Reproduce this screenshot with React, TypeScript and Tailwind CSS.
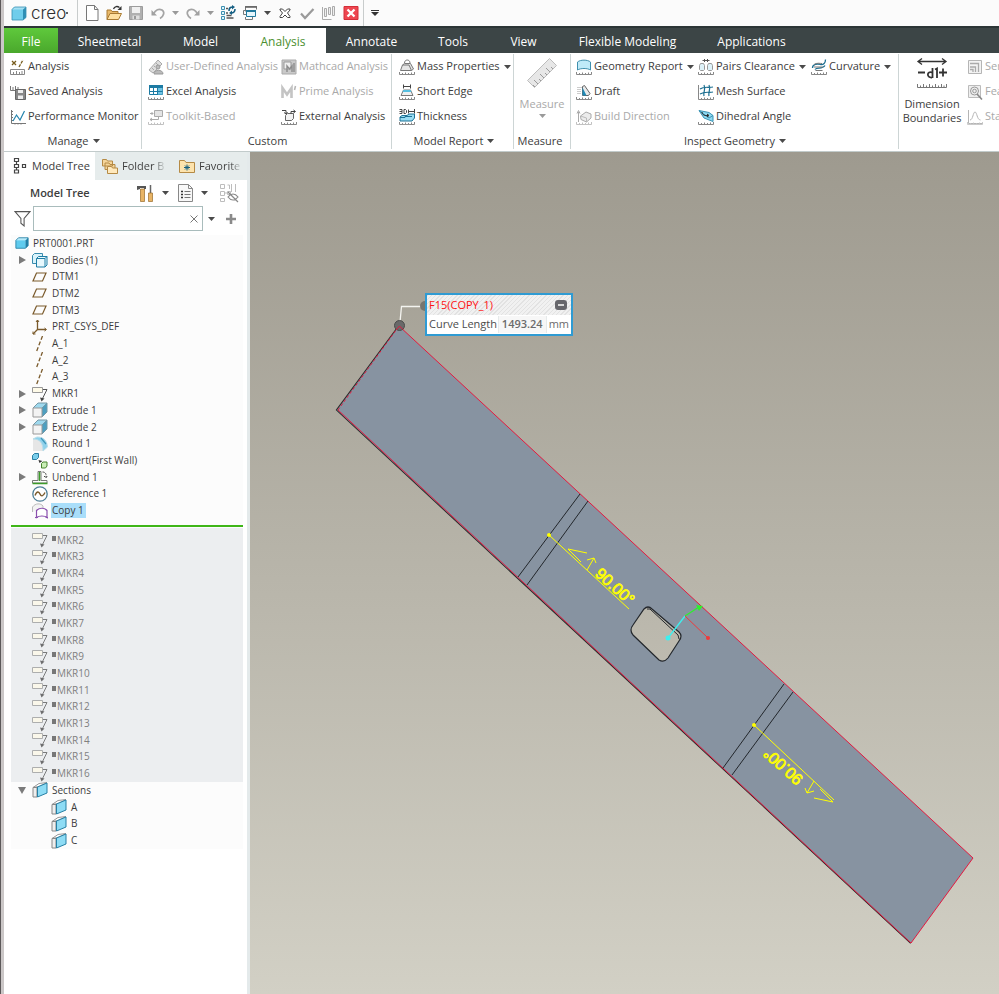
import { FC, ReactNode } from "react";

export default function App() {
  return (
    <div className="flex min-h-screen overflow-hidden bg-white font-['Open_Sans','Noto_Sans',sans-serif] text-[11px] text-[#3c3c3c]">
      <div className="w-1 shrink-0 border-l border-[#5c5859] bg-[#cbc7c7]" />
      <div className="flex min-w-0 flex-1 flex-col">
        <QuickAccessBar />
        <TabBar />
        <Ribbon />
        <main className="flex flex-1">
          <ModelTreePanel />
          <Viewport />
        </main>
      </div>
    </div>
  );
}

/* ---------- shared bits ---------- */

interface IconProps {
  children: ReactNode;
  size?: string;
  box?: string;
}

const Icon: FC<IconProps> = ({ children, size = "size-4", box = "0 0 16 16" }) => (
  <svg viewBox={box} className={`${size} shrink-0`} fill="none" aria-hidden="true">
    {children}
  </svg>
);

const Caret: FC<{ tone?: string }> = ({ tone = "text-[#4a4a4a]" }) => (
  <svg viewBox="0 0 7 4" className={`h-1 w-[7px] shrink-0 ${tone}`} aria-hidden="true">
    <path d="M0 0h7L3.5 4z" fill="currentColor" />
  </svg>
);

const Ticks: FC<{ tone?: string }> = ({ tone = "#7a7a7a" }) => (
  <path d="M.5 13v2.500h15V13M3.500 14v1M6.500 13.500V15M9.500 14v1M12.500 13.500V15" stroke={tone} strokeWidth=".9" />
);

/* ---------- quick access ---------- */

const QuickButton: FC<{ label: string; children: ReactNode }> = ({ label, children }) => (
  <button type="button" aria-label={label} className="flex w-[22px] items-center justify-center">
    {children}
  </button>
);

const QuickCaret: FC<{ label: string; tone?: string }> = ({ label, tone }) => (
  <button type="button" aria-label={label} className="flex w-[13px] items-center justify-center">
    <Caret tone={tone} />
  </button>
);

function QuickAccessBar() {
  return (
    <header className="flex h-[26px] items-stretch bg-[#fbfbfb]">
      <div className="flex w-[74px] items-center gap-1 border-r border-[#c8cccc] pl-[7px]">
        <Icon>
          <path d="M1 4l2-2h12v10l-3 3H1z" fill="#a5e0f3" />
          <path d="M1 4.500h11V15H1z" fill="#6fcdeb" />
          <path d="M12 4.500l3-2.500v10.500L12 15z" fill="#2f8fb5" />
          <path d="M1 4.500L3.500 2H15v10.500L12 15H1z" stroke="#3690b3" strokeWidth=".8" />
        </Icon>
        <span className="font-['Inter',sans-serif] text-[17px] leading-5 font-light text-[#2d2d2d]">creo</span>
        <span className="-ml-1 size-[2px] rounded-full bg-[#2d2d2d]" />
      </div>
      <div className="flex pl-[3px]">
        <QuickButton label="New">
          <Icon>
            <path d="M2.500.5h8l3.500 4v11H2.500z" fill="#fff" stroke="#777" />
            <path d="M10.500.5v4H14" stroke="#777" />
          </Icon>
        </QuickButton>
        <QuickButton label="Open">
          <Icon>
            <path d="M1 14.500V5h4l1 1.500h6V9" fill="#e9b96a" stroke="#a97b33" />
            <path d="M1 14.500L4 8.500h11.500l-3 6z" fill="#ffe0a0" stroke="#a97b33" />
            <path d="M7.500 4c1-3 4-3 6-1.500" stroke="#333" strokeWidth="1.300" />
            <path d="M15.500 1v4h-4z" fill="#333" />
          </Icon>
        </QuickButton>
        <QuickButton label="Save">
          <Icon>
            <path d="M1.500 1.500h13v13h-13z" fill="#b0b0b0" stroke="#9c9c9c" />
            <path d="M4 2h8v6H4z" fill="#f0f0f0" />
            <path d="M4.500 10.500h7v4h-7z" fill="#dedede" />
            <path d="M6 11h2v3H6z" fill="#999" />
          </Icon>
        </QuickButton>
        <QuickButton label="Undo">
          <Icon>
            <path d="M1.500 5v5.500H7z" fill="#a0a0a0" />
            <path d="M3.500 9C5.500 4.500 9 3.500 12 5c3 2 2 6-2 8.500" stroke="#a4a4a4" strokeWidth="1.700" />
          </Icon>
        </QuickButton>
        <QuickCaret label="Undo list" tone="text-[#999]" />
        <QuickButton label="Redo">
          <Icon>
            <path d="M14.500 5v5.500H9z" fill="#a0a0a0" />
            <path d="M12.500 9C10.500 4.500 7 3.500 4 5c-3 2-2 6 2 8.500" stroke="#a4a4a4" strokeWidth="1.700" />
          </Icon>
        </QuickButton>
        <QuickCaret label="Redo list" tone="text-[#999]" />
        <QuickButton label="Regenerate">
          <Icon>
            <path d="M1.500 1.500h3v3h-3zM1.500 6.500h3v3h-3zM1.500 11.500h3v3h-3z" fill="#dff5fc" stroke="#3d8fb0" />
            <path d="M6.500 13h7M6.500 10.500h5M6 3.500h2M6 8h2" stroke="#555" strokeWidth="1.300" />
            <path d="M9 6c0-3 1-4 4-4M15 4c0 3-1 4-4 4" stroke="#155f83" strokeWidth="1.600" />
            <path d="M12 0l3 2-3 2.500zM12 5.500l-3 2.500 3 2z" fill="#155f83" />
          </Icon>
        </QuickButton>
        <QuickButton label="Windows">
          <Icon>
            <path d="M3.500 6.500v-5h11v3" stroke="#777" />
            <path d="M3 2h12" stroke="#666" strokeWidth="1.600" />
            <path d="M4 5.500H1.500v4H4M3.500 12v2.500h7V12" stroke="#777" />
            <path d="M4.500 5.500h9v6h-9z" fill="#e6f6fc" stroke="#21799d" />
            <path d="M4 6h10" stroke="#21799d" strokeWidth="2" />
          </Icon>
        </QuickButton>
        <QuickCaret label="Window list" />
        <QuickButton label="Close window">
          <Icon>
            <path d="M3 4h2.500L8 6.500 10.500 4H13v1l-2.500 3 2.500 3.500v1h-2.500L8 10l-2.500 2.500H3v-1L5.500 8 3 5z" fill="#fff" stroke="#444" />
          </Icon>
        </QuickButton>
        <QuickButton label="Accept">
          <Icon>
            <path d="M2 8.500l4 4.500L14.500 4" stroke="#9a9a9a" strokeWidth="2.200" />
          </Icon>
        </QuickButton>
        <QuickButton label="Align">
          <Icon>
            <path d="M1.500 2v12.500h9" stroke="#aaa" />
            <path d="M3.500 3.500h2v8h-2zM7.500 2.500h2v7h-2zM11.500 1.500h2v9h-2z" fill="#eee" stroke="#aaa" />
          </Icon>
        </QuickButton>
        <QuickButton label="Close">
          <Icon>
            <path d="M1 1.500h14v13H1z" fill="#ee4650" stroke="#d42e38" />
            <path d="M4.500 4.500l7 7m0-7l-7 7" stroke="#fff" strokeWidth="2.300" />
          </Icon>
        </QuickButton>
      </div>
      <button type="button" aria-label="Customize toolbar" className="ml-px border-l border-[#c8cccc] px-[7px]">
        <svg viewBox="0 0 8 6" className="h-[6px] w-2" aria-hidden="true">
          <path d="M0 0h8v1H0zM0 2h8L4 6z" fill="#333" />
        </svg>
      </button>
    </header>
  );
}

/* ---------- tabs ---------- */

const TABS = [
  { name: "File", style: "w-[54px] bg-linear-to-b from-[#5fc93c] to-[#4aa82c] text-white" },
  { name: "Sheetmetal", style: "w-[103px] text-white" },
  { name: "Model", style: "w-[79px] text-white" },
  { name: "Analysis", style: "w-[86px] bg-white text-[#4b8f2f]" },
  { name: "Annotate", style: "w-[91px] text-white" },
  { name: "Tools", style: "w-[72px] text-white" },
  { name: "View", style: "w-[69px] text-white" },
  { name: "Flexible Modeling", style: "w-[139px] text-white" },
  { name: "Applications", style: "w-[109px] text-white" },
];

function TabBar() {
  return (
    <nav className="flex h-[27px] border-t-2 border-[#2c3536] bg-[#3c4546] text-xs">
      {TABS.map((tab) => (
        <button key={tab.name} type="button" className={`shrink-0 pt-[2px] ${tab.style}`}>
          {tab.name}
        </button>
      ))}
    </nav>
  );
}

/* ---------- ribbon ---------- */

interface CommandProps {
  label: string;
  icon: ReactNode;
  disabled?: boolean;
  menu?: boolean;
}

const Command: FC<CommandProps> = ({ label, icon, disabled, menu }) => (
  <button
    type="button"
    disabled={disabled}
    className={`flex h-[25px] items-center gap-[2px] whitespace-nowrap ${disabled ? "text-[#a9a9a9]" : ""}`}
  >
    <Icon>{icon}</Icon>
    <span>{label}</span>
    {menu && (
      <span className="ml-[2px]">
        <Caret />
      </span>
    )}
  </button>
);

interface GroupProps {
  title?: string;
  width: string;
  menu?: boolean;
  children: ReactNode;
}

const Group: FC<GroupProps> = ({ title, width, menu, children }) => (
  <section className={`flex flex-col border-r border-[#cdd5d5] ${width}`}>
    <div className="flex h-[75px]">{children}</div>
    {title && (
      <h2 className="flex flex-1 items-center justify-center gap-1 pt-1 pr-1">
        {title}
        {menu && <Caret />}
      </h2>
    )}
  </section>
);

const userDefinedIcon = (
  <>
    <path d="M1 11L10 1l4 4-9 9z" fill="#ddd" stroke="#aaa" />
    <path d="M4 9l2 2M6 7l1 1M8 4l2 2" stroke="#aaa" />
    <path d="M10 10a2 2 0 100-4 2 2 0 000 4zM6 15c0-5 9-5 9 0z" fill="#bbb" stroke="#999" />
  </>
);

const mathcadIcon = (
  <>
    <path d="M1 1h14v14H1z" fill="#c9c9c9" stroke="#aaa" />
    <path d="M3 3h7v7H3z" fill="#eee" stroke="#999" />
    <path d="M6 13V7l2.500 3L11 7v6M13 4v9" stroke="#8c8c8c" strokeWidth="1.400" />
  </>
);

const buildIcon = (
  <>
    <path d="M2.500 13V3M1 4.500l1.500-3L4 4.500M4.500 7L10 3l5 2v4l-4.500 4L5 10.500z" fill="#ececec" stroke="#aaa" />
    <path d="M4.500 7l6 2v4" stroke="#bbb" />
    <Ticks tone="#bbb" />
  </>
);

function Ribbon() {
  return (
    <div className="flex h-[99px] overflow-hidden border-b border-[#c2cbcb] bg-white pt-px pb-[2px]">
      <Group title="Manage" width="w-[138px] pl-[6px]" menu>
        <div>
          <Command
            label="Analysis"
            icon={
              <>
                <path d="M2 2l4 4m0-4L2 6" stroke="#775c1d" strokeWidth="1.300" />
                <path d="M9 8l4-7" stroke="#775c1d" strokeWidth="1.300" strokeDasharray="3 1" />
                <path d="M.5 10.500h14v5H.5zM3.500 13v2M6.500 12v3M9.500 13v2M12 12v3" stroke="#888" />
              </>
            }
          />
          <Command
            label="Saved Analysis"
            icon={
              <>
                <path d="M.5 2v4.500h9M3 3v3M5.500 2v4M8 3v3" stroke="#777" />
                <path d="M5.500 5.500h10v10h-10z" fill="#888" stroke="#666" />
                <path d="M8 6h5v3H8zM8 11.500h5V15H8z" fill="#eee" />
              </>
            }
          />
          <Command
            label="Performance Monitor"
            icon={
              <>
                <path d="M1.500 1v13.500H16M1.500 2.500H3M1.500 5.500H3M1.500 8.500H3M1.500 11.500H3M5 14v1.500M8 14v1.500M11 14v1.500" stroke="#777" />
                <path d="M3 12l3.500-6 3.500 5L14.500 2" stroke="#2584ad" strokeWidth="1.200" />
              </>
            }
          />
        </div>
      </Group>

      <Group title="Custom" width="w-[250px] pl-[6px]">
        <div className="w-[133px]">
          <Command label="User-Defined Analysis" icon={userDefinedIcon} disabled />
          <Command
            label="Excel Analysis"
            icon={
              <>
                <path d="M1.500 1.500h13v9h-13z" fill="#fff" stroke="#1d7ba3" />
                <path d="M1 1h14v3H1z" fill="#1d7ba3" />
                <path d="M10 4h4.500v6.500H10z" fill="#6fc3e3" />
                <path d="M5.500 4v6.500M9.500 4v6.500M1.500 7.500h13" stroke="#1d7ba3" />
                <Ticks />
              </>
            }
          />
          <Command
            label="Toolkit-Based"
            icon={
              <>
                <path d="M6.500 1.500h8v6h-8z" fill="#e4e4e4" stroke="#aaa" />
                <path d="M2 4.500h3M3.500 3l1.500 1.500L3.500 6M10.500 7.500v3H2M4 9l-2 1.500L4 12" stroke="#aaa" />
                <Ticks tone="#bbb" />
              </>
            }
            disabled
          />
        </div>
        <div>
          <Command label="Mathcad Analysis" icon={mathcadIcon} disabled />
          <Command
            label="Prime Analysis"
            icon={
              <>
                <path d="M1.500 14V4L6 10.500 10.500 4v10" stroke="#c4c4c4" strokeWidth="2.600" />
                <path d="M14.500 2L13.500 6" stroke="#b5b5b5" strokeWidth="1.600" />
              </>
            }
            disabled
          />
          <Command
            label="External Analysis"
            icon={
              <>
                <path d="M4.500 6.500l2-2h6v5l-2 2h-6z" fill="#f2f2f2" stroke="#666" />
                <path d="M1 1.500h4V5M3 3.500L5 5l1.500-2M10 5V2.500h4M12.500 1l2 1.500-2 1.500" stroke="#444" />
                <Ticks />
              </>
            }
          />
        </div>
      </Group>

      <Group title="Model Report" width="w-[122px] pl-[7px]" menu>
        <div>
          <Command
            label="Mass Properties"
            icon={
              <>
                <path d="M1.500 11.500L3.500 6l2-1.500h6L14.500 10l-2 1.500z" fill="#e5e5e5" stroke="#777" />
                <path d="M3.500 6h6.500l2.500 5.500M5.500 4c0-4 5.500-4 5.500 0" stroke="#777" />
                <Ticks />
              </>
            }
            menu
          />
          <Command
            label="Short Edge"
            icon={
              <>
                <path d="M4.500.5v4M11.500.5v4M5 2.500h6" stroke="#444" />
                <path d="M4.500 6h7l2.500 5.500H2z" fill="#efefef" stroke="#777" />
                <path d="M4.500 6h7l1 2h-9z" fill="#56bfe0" />
                <Ticks />
              </>
            }
          />
          <Command
            label="Thickness"
            icon={
              <>
                <path d="M.5.500H3v4H.5M.5 2.500H3M5 .5v4h1.500l1-1v-2l-1-1zM9.500.5v4M15.500 0v4.500M10 2.500h5" stroke="#444" />
                <path d="M1 8l2-1.500h5l2-1.500h5.500v4L13 12H1z" fill="#9adcf2" stroke="#1d7396" />
                <path d="M1 8.500h5v-1h7" stroke="#1d7396" />
                <Ticks />
              </>
            }
          />
        </div>
      </Group>

      <Group title="Measure" width="w-[57px]">
        <button type="button" disabled className="flex flex-1 flex-col items-center pt-[3px] text-[#a9a9a9]">
          <Icon size="size-8" box="0 0 32 32">
            <path d="M1.500 23.500L23.500 1.500l7 7-22 22z" fill="#e7e7e7" stroke="#bdbdbd" />
            <path
              d="M9 30l-2-2M12 27l-4-4M15 24l-2-2M18 21l-4-4M21 18l-2-2M24 15l-4-4M27 12l-2-2"
              stroke="#9a9a9a"
            />
          </Icon>
          <span className="mt-[7px]">Measure</span>
          <span className="mt-px">
            <Caret tone="text-[#9a9a9a]" />
          </span>
        </button>
      </Group>

      <Group title="Inspect Geometry" width="w-[328px] pl-[5px]" menu>
        <div className="w-[122px]">
          <Command
            label="Geometry Report"
            icon={
              <>
                <path d="M1.500 11V3c3-2.500 10-2.500 13 0v8c-3-2-10-2-13 0z" fill="#bfeaf8" stroke="#3f8fad" />
                <Ticks />
              </>
            }
            menu
          />
          <Command
            label="Draft"
            icon={
              <>
                <path d="M1 3.500h5M1 5.500h4M1 7.500h4M1 9.500h4" stroke="#ccc" />
                <path d="M6.500 11.500v-9l2-1 5.500 8-1.500 2z" fill="#e9e9e9" stroke="#666" />
                <path d="M6.500 11.500v-8l4 8z" fill="#1f8ab6" />
                <Ticks />
              </>
            }
          />
          <Command label="Build Direction" icon={buildIcon} disabled />
        </div>
        <div className="w-[113px]">
          <Command
            label="Pairs Clearance"
            icon={
              <>
                <path d="M2.500 4.500h3l1 2v4l-1 1h-3l-1-1v-4zM10.500 4.500h3l1 2v4l-1 1h-3l-1-1v-4z" fill="#def3fa" stroke="#999" />
                <path d="M4.500 1.500h7M6.500 0v3M9.500 0v3" stroke="#555" />
                <Ticks />
              </>
            }
            menu
          />
          <Command
            label="Mesh Surface"
            icon={
              <>
                <path d="M2 5c4-3 8-1 13-2M2 10c5-3 9-1 13-2M6 1c2 4-1 7 0 11M11 1c2 4-1 7 0 11" stroke="#1c6f91" strokeWidth="1.200" />
                <path d="M.5 1v14.500h15V13M3.500 14v1M6.500 13.500V15M9.500 14v1M12.500 13.500V15" stroke="#888" />
              </>
            }
          />
          <Command
            label="Dihedral Angle"
            icon={
              <>
                <path d="M1 1.500l10 2 4 3v6L6 9z" fill="#8ed8f0" stroke="#3b94b5" />
                <path d="M1 1.500L11 9l4-2.500" stroke="#3b94b5" />
                <path d="M4 3c0 3 3 4 6 3.500M9 5l2 1.500L9 8" stroke="#222" />
                <Ticks />
              </>
            }
          />
        </div>
        <div>
          <Command
            label="Curvature"
            icon={
              <>
                <path d="M1.500 9c0-4 5-4.500 8-3.500 3 .5 5-1.500 5-5M4 10.500c2-3 7 .5 10-4" stroke="#1c6f91" strokeWidth="1.300" />
                <path d="M3 5.500c3-2 6-1 8-1M3 8h9M4.500 11.500h7" stroke="#777" />
                <Ticks />
              </>
            }
            menu
          />
        </div>
      </Group>

      <div className="flex min-w-0 flex-1 overflow-hidden">
        <button type="button" className="flex w-[66px] shrink-0 flex-col items-center pt-[3px] leading-[14px]">
          <Icon size="size-8" box="0 0 32 32">
            <path d="M2 4.500h28M6 1.500l-4 3 4 3M26 1.500l4 3-4 3" stroke="#333" strokeWidth="1.300" />
            <path
              d="M2 15.500h7M23 15.500h8M27 11.500v8M16.500 11v10M16 15.500c-5-2-6 5.500 0 5M19 12.500l2-1V21"
              stroke="#333"
              strokeWidth="1.800"
            />
            <path d="M1.500 27v3.500h29V27M4.500 28.500v2M7.500 27v3M10.500 28.500v2M13.500 27v3M16.500 28.500v2M19.500 27v3M22.500 28.500v2M25.500 27v3M28 28.500v2" stroke="#777" />
          </Icon>
          <span className="mt-2">
            Dimension
            <br />
            Boundaries
          </span>
        </button>
        <div className="pl-[2px]">
          <Command
            label="Sen"
            icon={
              <>
                <path d="M1.500 1.500h13v13h-13z" fill="#f3f3f3" stroke="#b5b5b5" />
                <path d="M3 4.500h8.500V13M3 8h5.500v5M3 10.500h3V13" stroke="#aaa" strokeWidth="1.300" />
              </>
            }
            disabled
          />
          <Command
            label="Fea"
            icon={
              <>
                <path d="M1.500 1.500h12v12h-12z" fill="#efefef" stroke="#bbb" />
                <circle cx="7.500" cy="7" r="4" stroke="#999" />
                <circle cx="7.500" cy="7" r="1.800" stroke="#999" />
                <path d="M10 10l5 5.500" stroke="#888" strokeWidth="1.600" />
              </>
            }
            disabled
          />
          <Command
            label="Sta"
            icon={
              <>
                <path d="M1.500 1v13.500H16M3 11c3 0 3-8 5-8s2 8 5.500 8" stroke="#b5b5b5" />
                <Ticks tone="#c5c5c5" />
              </>
            }
            disabled
          />
        </div>
      </div>
    </div>
  );
}

/* ---------- model tree ---------- */

const TREE_ICONS: Record<string, ReactNode> = {
  part: (
    <>
      <path d="M1 5l3-3h11v9l-3 3H1z" fill="#b9ebfa" />
      <path d="M1 5h11v9H1z" fill="#5fcbee" />
      <path d="M12 5l3-3v9l-3 3z" fill="#1f7ea6" />
      <path d="M1 5l3-3h11v9l-3 3H1z" stroke="#2b83a8" />
    </>
  ),
  bodies: (
    <>
      <path d="M.5 3.500l2-2h8v8l-2 2h-8z" fill="#d9f3fb" stroke="#3a8cae" />
      <path d="M4.500 6.500l2-2h8.500v8.500l-2 2H4.500z" fill="#e8f8fd" stroke="#1f7ea6" />
      <path d="M4.500 6.500H13V15m0-8.500l2-2" stroke="#1f7ea6" />
    </>
  ),
  plane: <path d="M4.500 4h9.500l-3.500 8H1z" stroke="#7a5a2b" strokeWidth="1.200" />,
  csys: (
    <>
      <path d="M5.500 1v9.500H14M5.500 10.500L1 15" stroke="#7a5a2b" strokeWidth="1.300" />
      <path d="M4 3l1.500-2L7 3M12.500 9l2 1.500-2 1.500M1 12.500V15h2.500" stroke="#7a5a2b" />
    </>
  ),
  axis: <path d="M10.500 0L4.500 15.500" stroke="#7a5a2b" strokeWidth="1.300" strokeDasharray="4 2" />,
  note: (
    <>
      <path d="M.5 1.500h10v5H.5z" fill="#fffbe8" stroke="#999" />
      <path d="M11 3.500h4l-5 10" stroke="#555" />
      <path d="M8 11.500l1.500 4 3-3z" fill="#444" />
    </>
  ),
  extrude: (
    <>
      <path d="M1 6l5-5h9v9l-5 5z" fill="#9fd9ee" />
      <path d="M10 6l5-5v9l-5 5z" fill="#4d9fc0" />
      <path d="M1 6l5-5h9v9l-5 5M10 6l5-5" stroke="#7598a6" />
      <path d="M1 6h9v9H1z" fill="#f3f3f3" stroke="#999" />
    </>
  ),
  round: (
    <>
      <path d="M1 3c7 0 10 4 10 12H1z" fill="#e6e6e6" />
      <path d="M1 3l4-2c7 0 10 4 10.500 10L11 15C11 7 8 3 1 3z" fill="#8fd2ec" stroke="#b9dde9" />
      <path d="M9 2l5 6" stroke="#3f97ba" strokeWidth="1.200" />
    </>
  ),
  convert: (
    <>
      <path d="M.5 2.500l2-2h4v4l-2 2h-4z" fill="#79cdeb" stroke="#2a7fa3" />
      <path d="M9.500 10.500l1.500-1.500h4v4l-1.500 2h-4z" fill="#c9eeb6" stroke="#48842f" />
      <path d="M6.500 7l4 1-3 2z" fill="#333" />
    </>
  ),
  unbend: (
    <>
      <path d="M.5 11.500H6v-9h3v9h6v2.500H.5z" fill="#fff" stroke="#777" />
      <path d="M.5 14.500h15M7.500 3v9" stroke="#3c9c2a" strokeWidth="1.500" />
      <path d="M10.500 3c3 0 4 2 3.500 5M12 7l2 2 1.500-2.500" stroke="#444" strokeDasharray="2 1" />
    </>
  ),
  reference: (
    <>
      <circle cx="8" cy="8" r="7.200" stroke="#4c7e97" strokeWidth="1.300" fill="#fff" />
      <path d="M3 9.500c2-5 4-4 5-1.500s3 3 5-1.500" stroke="#7a5a2b" strokeWidth="1.400" />
    </>
  ),
  copy: (
    <>
      <path d="M.5 9V4c3-4 8-4 10.500-1v3" stroke="#bbb" fill="#f3f3f3" />
      <path d="M4.500 14.500v-7c3-3 8-3 10.500 0v7c-2-2-8-2-10.500 0zM3 14.500h3M13.500 14.500H16" stroke="#8a4fae" strokeWidth="1.200" fill="#fff" />
    </>
  ),
  section: (
    <>
      <path d="M1 5.500L7 1.500l8-1-8 4z" fill="#fff" stroke="#999" />
      <path d="M1 5.500h4v9.500H1z" fill="#eee" stroke="#888" />
      <path d="M5.500 5L15 1v10l-9.500 4z" fill="#8edcf5" stroke="#2780a5" />
    </>
  ),
};

interface TreeItem {
  name: string;
  icon: string;
  level?: number;
  expander?: "open" | "closed";
  suppressed?: boolean;
  selected?: boolean;
}

const ACTIVE_ITEMS: TreeItem[] = [
  { name: "PRT0001.PRT", icon: "part", level: 0 },
  { name: "Bodies (1)", icon: "bodies", expander: "closed" },
  { name: "DTM1", icon: "plane" },
  { name: "DTM2", icon: "plane" },
  { name: "DTM3", icon: "plane" },
  { name: "PRT_CSYS_DEF", icon: "csys" },
  { name: "A_1", icon: "axis" },
  { name: "A_2", icon: "axis" },
  { name: "A_3", icon: "axis" },
  { name: "MKR1", icon: "note", expander: "closed" },
  { name: "Extrude 1", icon: "extrude", expander: "closed" },
  { name: "Extrude 2", icon: "extrude", expander: "closed" },
  { name: "Round 1", icon: "round" },
  { name: "Convert(First Wall)", icon: "convert" },
  { name: "Unbend 1", icon: "unbend", expander: "closed" },
  { name: "Reference 1", icon: "reference" },
  { name: "Copy 1", icon: "copy", selected: true },
];

const SUPPRESSED_ITEMS: TreeItem[] = Array.from({ length: 15 }, (_, i) => ({
  name: `MKR${i + 2}`,
  icon: "note",
  suppressed: true,
}));

const SECTION_ITEMS: TreeItem[] = [
  { name: "Sections", icon: "section", expander: "open" },
  { name: "A", icon: "section", level: 2 },
  { name: "B", icon: "section", level: 2 },
  { name: "C", icon: "section", level: 2 },
];

const LEVEL_INDENT = ["pl-1", "pl-[7px]", "pl-10"];

const TreeRow: FC<{ item: TreeItem }> = ({ item }) => {
  const level = item.level ?? 1;
  return (
    <li className={`flex items-center ${LEVEL_INDENT[level]}`}>
      {level === 1 && (
        <span className="w-[14px] shrink-0">
          {item.expander && (
            <button type="button" aria-label={`Toggle ${item.name}`} className="block">
              <svg viewBox="0 0 8 8" className="size-2" aria-hidden="true">
                <path d={item.expander === "open" ? "M0 1h8L4 8z" : "M1 0l7 4-7 4z"} fill="#7b7b7b" />
              </svg>
            </button>
          )}
        </span>
      )}
      <span className={item.suppressed ? "opacity-75" : ""}>
        <Icon size={level === 0 ? "size-[14px]" : "size-4"}>{TREE_ICONS[item.icon]}</Icon>
      </span>
      {item.suppressed && <span className="mb-1 ml-1 h-[5px] w-1 bg-[#777]" />}
      <span
        className={`whitespace-nowrap leading-[15px] ${
          item.suppressed ? "ml-px text-[#808080]" : item.selected ? "ml-[3px] bg-[#a9defa] px-px pr-[2px]" : "ml-1"
        }`}
      >
        {item.name}
      </span>
    </li>
  );
};

const PANEL_TABS = [
  {
    name: "Model Tree",
    style: "w-[91px] gap-[3px] bg-white pl-[9px]",
    icon: <path d="M1.500.5h4v3h-4zM1.500 6.500h4v3h-4zM1.500 12h4v3h-4zM9.500 6.500h3v3h-3zM3.500 3.500v3M3.500 9.500V12" stroke="#444" strokeWidth="1.200" />,
  },
  {
    name: "Folder B",
    style: "w-[76px] gap-1 pl-[7px]",
    icon: (
      <>
        <path d="M.5 8V1.500h4l1 1.500h5v5zM3 11.500V5h4l1 1.500h5v5z" fill="#f5d59a" stroke="#b58a45" />
        <path d="M5.500 15.500v-7h4l1 1.500h5v5.500z" fill="#ffe9bd" stroke="#b58a45" />
      </>
    ),
  },
  {
    name: "Favorite",
    style: "w-[76px] gap-1 pl-2",
    icon: (
      <>
        <path d="M.5 14.500V2.500h5l1.500 2h8.500v10z" fill="#fde3ad" stroke="#b58a45" />
        <path d="M8 6.500v6M5 9.500h6M6 7.500l4 4M10 7.500l-4 4" stroke="#17607f" />
      </>
    ),
  },
];

function ModelTreePanel() {
  return (
    <aside className="w-[246px] shrink-0 border-r-[3px] border-[#e4eaeb] bg-white">
      <div className="flex h-7 bg-[#e6ecec]">
        {PANEL_TABS.map((tab) => (
          <button
            key={tab.name}
            type="button"
            className={`flex shrink-0 items-center overflow-hidden whitespace-nowrap ${tab.style}`}
          >
            <Icon>{tab.icon}</Icon>
            <span className={tab.name === "Model Tree" ? "" : "bg-linear-to-r from-[#3c3c3c] from-75% to-[#c9cfcf] bg-clip-text text-transparent"}>
              {tab.name}
            </span>
          </button>
        ))}
      </div>

      <div className="flex h-[26px] items-center pr-2 pl-[26px]">
        <h1 className="flex-1 font-semibold">Model Tree</h1>
        <button type="button" aria-label="Tree settings" className="flex items-center gap-2">
          <Icon size="size-[18px]" box="0 0 18 18">
            <path d="M1 2h9v3H8V4H4v1L1 6z" fill="#555" />
            <path d="M4.500 5h4v12.500h-4z" fill="#e8b465" stroke="#9a6c2a" strokeWidth=".7" />
            <path d="M14.500 1v8" stroke="#666" strokeWidth="1.500" />
            <path d="M12.500 9h4v8.500h-4z" fill="#e8b465" stroke="#9a6c2a" strokeWidth=".7" />
          </Icon>
          <Caret />
        </button>
        <button type="button" aria-label="Tree display" className="ml-2 flex items-center gap-[6px]">
          <Icon size="size-[18px]" box="0 0 18 18">
            <path d="M1.500.5h10l4 4v13h-14z" fill="#f8f8f8" stroke="#888" />
            <path d="M11.500.5v4h4" stroke="#888" />
            <path d="M4 7.500h2M4 10.500h2M4 13.500h2" stroke="#333" strokeWidth="1.600" />
            <path d="M7.500 7.500h6M7.500 10.500h6M7.500 13.500h6" stroke="#777" />
          </Icon>
          <Caret />
        </button>
        <button type="button" aria-label="Show hidden" className="ml-[11px]">
          <Icon size="size-5" box="0 0 20 20">
            <path d="M1.500 1.500h4v4h-4zM1.500 8.500h4v4h-4zM1.500 15.500h4v3h-4zM8.500 8.500h3v3h-3zM5.500 10h3M8.500 2h2v4M12.500 1v8M16.500 1v8" stroke="#bdbdbd" />
            <path d="M9 14c3-4 7-4 10 0-3 4-7 4-10 0zM9 9l10 10" stroke="#888" strokeWidth="1.200" />
          </Icon>
        </button>
      </div>

      <div className="flex items-center pl-[10px]">
        <Icon size="size-[17px]">
          <path d="M1 1.500h14L9.500 8v7l-3-2.500V8z" fill="#fff" stroke="#555" />
        </Icon>
        <div className="relative ml-[2px]">
          <input
            type="text"
            aria-label="Search the model tree"
            className="block h-[25px] w-[170px] border border-[#a9bcbc] bg-white pr-5 pl-1"
          />
          <button type="button" aria-label="Clear search" className="absolute top-[9px] right-[5px]">
            <Icon size="size-2" box="0 0 8 8">
              <path d="M.5.5l7 7m0-7l-7 7" stroke="#777" />
            </Icon>
          </button>
        </div>
        <button type="button" aria-label="Search options" className="px-[5px] py-2">
          <Caret />
        </button>
        <button type="button" aria-label="Add filter" className="ml-[5px]">
          <Icon size="size-3" box="0 0 12 12">
            <path d="M6 1v10M1 6h10" stroke="#8a8a8a" strokeWidth="2.600" />
          </Icon>
        </button>
      </div>

      <div className="mt-1 mr-1 ml-[7px] bg-[#fcfcfc] text-[10px]">
        <ul className="grid h-[284px] auto-rows-fr">
          {ACTIVE_ITEMS.map((item) => (
            <TreeRow key={item.name} item={item} />
          ))}
        </ul>
        <div className="mt-[6px] h-[2px] bg-[#3fb618]" />
        <div className="mt-px bg-[#eceef0] pt-1">
          <ul className="grid h-[250px] auto-rows-fr">
            {SUPPRESSED_ITEMS.map((item) => (
              <TreeRow key={item.name} item={item} />
            ))}
          </ul>
        </div>
        <ul className="grid h-[67px] auto-rows-fr">
          {SECTION_ITEMS.map((item) => (
            <TreeRow key={item.name} item={item} />
          ))}
        </ul>
      </div>
    </aside>
  );
}

/* ---------- graphics area ---------- */

interface BendNoteProps {
  transform: string;
  textTransform: string;
}

// The bend angle note: flag arrow, up arrow and the value.
const BendNote: FC<BendNoteProps> = ({ transform, textTransform }) => (
  <g transform={transform} stroke="#ffff00">
    <path d="M19 14l19 4M19 14l13 13M38 35l7-12M38 25l7-2 2 5" />
    <text
      transform={textTransform}
      fill="#ffff00"
      strokeWidth=".7"
      className="font-['Liberation_Sans',sans-serif] text-[16px]"
    >
      90.00°
    </text>
  </g>
);

function Viewport() {
  return (
    <section className="relative min-w-0 flex-1 overflow-hidden bg-linear-to-b from-[#9e9a8f] to-[#d2d0c5]">
      <svg viewBox="250 152 749 842" className="block h-[842px] w-[749px] max-w-none" fill="none" role="img" aria-label="Part model">
        <path d="M399 326L337 410 911 943" stroke="#2b2b2b" strokeWidth="2" />
        <path
          fillRule="evenodd"
          d="M399 326L973 858 911 943 337 410zM644 609Q648 605 652 609L679 632Q683 636 679 641L668 658Q664 663 659 660L633 635Q629 630 633 625z"
          fill="#8793a1"
        />
        <path d="M399 326L973 858 911 943 338 410" stroke="#e6193f" />
        <path d="M338 410L399 326" stroke="#e6193f" strokeDasharray="3 2" />
        <path d="M580 494L518 577M588 501L527 585M784 684L723 768M793 692L732 775" stroke="#23272c" />
        <path
          d="M644 609Q648 605 652 609L679 632Q683 636 679 641L668 658Q664 663 659 660L633 635Q629 630 633 625z"
          stroke="#23272c"
          strokeWidth="1.200"
        />
        <path d="M647 609l3 0 28 26 1 4" stroke="#23272c" />

        <path d="M549 535L629 609M754 725L834 800" stroke="#ffff00" />
        <circle cx="549" cy="535" r="2" fill="#ffff00" />
        <circle cx="754" cy="725" r="2" fill="#ffff00" />
        <BendNote transform="translate(549 535)" textTransform="translate(45 40) rotate(42)" />
        <BendNote transform="translate(852 816) rotate(180)" textTransform="translate(48 38) rotate(42)" />

        <path d="M685 616l14-9" stroke="#2df02d" strokeWidth="1.300" />
        <path d="M696 605l7 1-4 5z" fill="#2df02d" />
        <path d="M685 616l-17 22" stroke="#3df0f0" strokeWidth="1.300" />
        <circle cx="668" cy="638" r="2.500" fill="#3df0f0" />
        <path d="M685 616l23 22" stroke="#f03a3a" />
        <circle cx="708" cy="638" r="2" fill="#f03a3a" />

        <path d="M425 306.500H401.500L400 322" stroke="#f4f4f0" strokeWidth="1.300" />
        <circle cx="425" cy="306" r="5" fill="#77766f" />
        <circle cx="399.500" cy="325.500" r="5" fill="#696969" stroke="#4b4b4b" />
        <path d="M396 330l3.500-4 3.500 3.500" stroke="#e6193f" />
      </svg>

      <div className="absolute top-[141px] left-[175px] w-[148px] border-2 border-[#2f9bd3] bg-white">
        <div className="flex h-5 items-center justify-between bg-[repeating-linear-gradient(135deg,#e2e2e2_0_1px,#f1f1f1_1px_3px)] pr-1 pl-[2px]">
          <span className="text-[#ff1414]">F15(COPY_1)</span>
          <button type="button" aria-label="Collapse" className="flex h-[10px] w-3 items-center justify-center rounded-[3px] bg-[#66666b]">
            <span className="h-[2px] w-[6px] bg-[#d8d8d8]" />
          </button>
        </div>
        <dl className="flex h-[19px] items-center whitespace-nowrap text-[#4c4c4c]">
          <dt className="flex-1 pl-[2px]">Curve Length</dt>
          <dd className="border-x border-[#e6eaea] bg-[#f7f7f7] px-[3px] font-semibold text-[#6b6b6b]">1493.24</dd>
          <dd className="px-[2px] text-[#6b6b6b]">mm</dd>
        </dl>
      </div>
    </section>
  );
}
